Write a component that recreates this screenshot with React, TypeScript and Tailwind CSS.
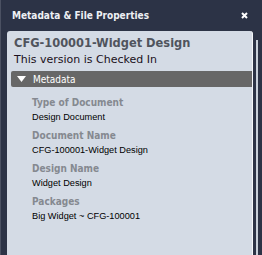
import { memo } from 'react';

const FIELDS = [
  { label: 'Type of Document', value: 'Design Document' },
  { label: 'Document Name', value: 'CFG-100001-Widget Design' },
  { label: 'Design Name', value: 'Widget Design' },
  { label: 'Packages', value: 'Big Widget ~ CFG-100001' },
];

const Field = memo(function Field({ label, value }: { label: string; value: string }) {
  return (
    <div className="flex flex-col">
      <span className="text-[10px] leading-[15px] font-bold text-[#858990] font-['DejaVu_Sans_Condensed','Liberation_Sans',sans-serif]">
        {label}
      </span>
      <span className="text-[9.2px] leading-[15px] text-black font-['Liberation_Sans',sans-serif]">{value}</span>
    </div>
  );
});

export default function App() {
  return (
    <div
      className="w-[262px] h-[255px] bg-[#2c3346] flex flex-col overflow-hidden border-l border-[#4b5162]"
      style={{ fontFamily: '"DejaVu Sans", Verdana, sans-serif' }}
    >
      <div className="h-[31px] flex items-center justify-between pl-[11px] pr-[14px] shrink-0">
        <span className="text-[10px] font-bold text-[#eef0f4] font-['DejaVu_Sans_Condensed','Liberation_Sans',sans-serif]">
          Metadata &amp; File Properties
        </span>
        <svg width="7" height="7" viewBox="0 0 7 7" className="mb-[1px]">
          <path d="M1 1 L6 6 M6 1 L1 6" stroke="#fff" strokeWidth="2" />
        </svg>
      </div>
      <div className="flex flex-1 min-h-0 pl-[6px]">
        <div className="w-[246px] bg-[#d4dbe5] rounded-t-[3px] border-r border-[#f4f6f9] flex flex-col">
          <div className="pl-[7px] pt-[3px] text-[12.7px] leading-[18px] font-bold text-[#50545d] font-['DejaVu_Sans_Condensed','Liberation_Sans',sans-serif]">
            CFG-100001-Widget Design
          </div>
          <div className="pl-[7px] text-[11px] leading-[16px] text-[#1a1020]">This version is Checked In</div>
          <div className="ml-[4px] mt-[3px] h-[16px] bg-[#676767] rounded-l-[2px] flex items-center gap-[7px] pl-[6px]">
            <svg width="9" height="6" viewBox="0 0 9 6">
              <path d="M0 0 L9 0 L4.5 6 Z" fill="#fff" />
            </svg>
            <span className="text-[10px] text-white font-['DejaVu_Sans_Condensed','Liberation_Sans',sans-serif]">
              Metadata
            </span>
          </div>
          <div className="pl-[25px] pt-[8px] flex flex-col gap-[3px]">
            {FIELDS.map(f => (
              <Field key={f.label} label={f.label} value={f.value} />
            ))}
          </div>
        </div>
        <div className="ml-[3px] mt-[9px] w-[2px] bg-[#c9d0da]" />
      </div>
    </div>
  );
}
